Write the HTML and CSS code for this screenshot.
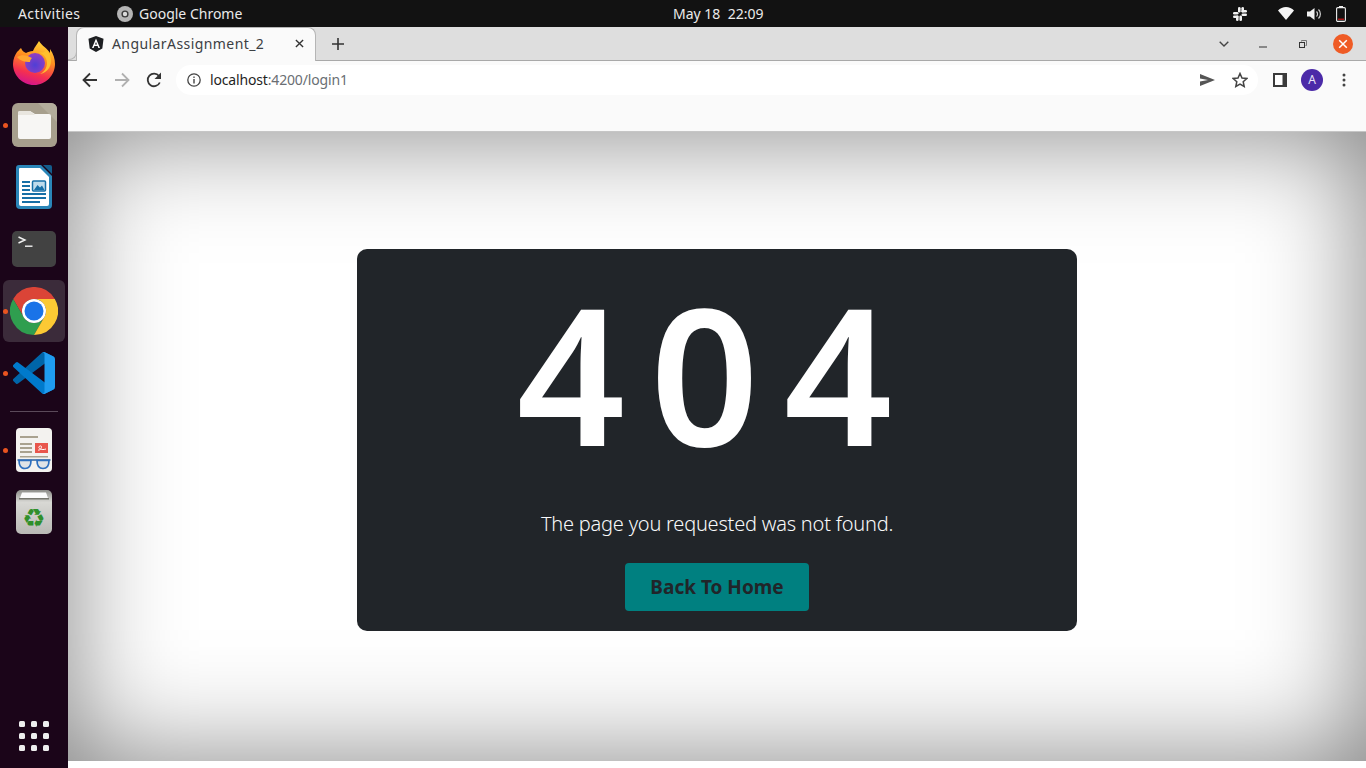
FILE: index.html
```html
<!DOCTYPE html>
<html lang="en">
<head>
<meta charset="utf-8">
<title>AngularAssignment_2</title>
<link rel="stylesheet" href="styles.css">
</head>
<body>
<header class="topbar">
  <span class="activities">Activities</span>
  <span class="appmenu">
    <svg class="appmenu-icon" viewBox="0 0 16 16"><circle cx="8" cy="8" r="8" fill="#b5b5b5"/><circle cx="8" cy="8" r="3.6" fill="#3a3a3a"/><circle cx="8" cy="8" r="2.2" fill="#dcdcdc"/></svg>
    Google Chrome
  </span>
  <time class="clock">May 18&nbsp;&nbsp;22:09</time>
  <span class="tray">
    <svg class="tray-slack" viewBox="0 0 14 14"><g fill="#f2f2f2"><rect x="5" y="0" width="2.6" height="5.500" rx="1.300"/><rect x="0" y="5" width="5.500" height="2.600" rx="1.300"/><rect x="8.400" y="0" width="2.600" height="5.500" rx="1.300"/><rect x="8.500" y="3" width="5.500" height="2.600" rx="1.300"/><rect x="3" y="8.500" width="2.600" height="5.500" rx="1.300"/><rect x="0" y="8.400" width="5.500" height="2.600" rx="1.300"/><rect x="6.400" y="8.500" width="2.600" height="5.500" rx="1.300"/><rect x="8.500" y="6.400" width="5.500" height="2.600" rx="1.300"/></g></svg>
    <svg class="tray-wifi" viewBox="0 0 16 13"><path d="M0 3.500C2 1.400 5 0 8 0s6 1.400 8 3.500L8 13Z" fill="#f5f5f5"/></svg>
    <svg class="tray-vol" viewBox="0 0 15 14"><path d="M0 4.500h3L7.500 1v12L3 9.500H0Z" fill="#f0f0f0"/><path d="M9.500 4.500a3.500 3.500 0 0 1 0 5M11.500 2.500a6.300 6.300 0 0 1 0 9" fill="none" stroke="#cfcfcf" stroke-width="1.200"/></svg>
    <svg class="tray-bat" viewBox="0 0 10 16"><rect x="3" y="0" width="4" height="2" fill="#eee"/><rect x=".6" y="1.600" width="8.800" height="13.800" rx="1.200" fill="none" stroke="#eee" stroke-width="1.100"/><rect x="2" y="12.600" width="6" height="1.200" fill="#d01818"/></svg>
  </span>
</header>

<div class="desktop">
  <nav class="dock">
    <div class="slot">
      <svg class="ico-firefox" viewBox="0 0 44 46">
        <defs>
          <linearGradient id="ffBody" x1=".7" y1="0" x2=".4" y2="1"><stop offset="0" stop-color="#ffd93b"/><stop offset=".4" stop-color="#ff8f1f"/><stop offset=".75" stop-color="#f5304f"/><stop offset="1" stop-color="#d3158c"/></linearGradient>
          <radialGradient id="ffGlobe" cx=".5" cy=".6" r=".65"><stop offset="0" stop-color="#4f3fd6"/><stop offset="1" stop-color="#9a3fbf"/></radialGradient>
        </defs>
        <path d="M1 24C1 35 10 45 22 45s21-10 21-21c0-5-1.500-10-5-15l0 4C35 8 30 6 27 1c-3 5-5 7-6 10-3 0-5 1-7 2-3-1-4-3-5-5-2 2-3 3-4 4-2 3-4 7-4 12Z" fill="url(#ffBody)"/>
        <circle cx="23" cy="23" r="10" fill="url(#ffGlobe)"/>
        <path d="M24 12c6 0 11 5 11 11 0 5-3 9-7 11 6-1 11-6 11-13 0-5-2-9-5-11-1 3-5 3-10 2Z" fill="#ffc02e"/>
        <path d="M5 17c5-3 10-2 15 1-1 1-2 2-2 4-5 0-10-1-13-5Z" fill="#ffa630"/>
      </svg>
    </div>
    <div class="slot running">
      <svg class="ico-files" viewBox="0 0 45 44">
        <rect width="45" height="44" rx="6" fill="#a79f8d"/>
        <path d="M26 0h13a6 6 0 0 1 6 6v13Z" fill="#b4ad9c"/>
        <path d="M6 10a2 2 0 0 1 2-2h10l5 3h14a2 2 0 0 1 2 2v21a2 2 0 0 1-2 2H8a2 2 0 0 1-2-2Z" fill="#f7f6f4"/>
        <path d="M6 12h17l-5-4H8a2 2 0 0 0-2 2Z" fill="#e9e6df"/>
      </svg>
    </div>
    <div class="slot">
      <svg class="ico-writer" viewBox="0 0 36 44">
        <path d="M3 0h22l11 11v29a4 4 0 0 1-4 4H4a4 4 0 0 1-4-4V3a3 3 0 0 1 3-3Z" fill="#2a86b8"/>
        <path d="M4 3h20l9 9v27a2 2 0 0 1-2 2H5a2 2 0 0 1-2-2V4a1 1 0 0 1 1-1Z" fill="#fff"/>
        <path d="M27 0l9 9V2a2 2 0 0 0-2-2Z" fill="#135d8c"/>
        <g fill="#176fa6"><rect x="6" y="16" width="8" height="2"/><rect x="6" y="20" width="8" height="2"/><rect x="6" y="24" width="8" height="2"/><rect x="6" y="28" width="24" height="2"/><rect x="6" y="32" width="24" height="2"/><rect x="6" y="36" width="18" height="2"/></g>
        <rect x="16.500" y="16" width="13" height="10" rx="1" fill="#bfdcec" stroke="#176fa6" stroke-width="1.500"/>
        <path d="M18 25l3.500-5 2.500 2.500 2-2 2.500 4.500Z" fill="#176fa6"/>
      </svg>
    </div>
    <div class="slot">
      <svg class="ico-term" viewBox="0 0 44 36">
        <rect width="44" height="36" rx="5" fill="#424242"/>
        <path d="M6.500 6l6.500 3-6.500 3" fill="none" stroke="#f2f2f2" stroke-width="1.400"/>
        <rect x="13" y="14.500" width="7.500" height="1.400" fill="#f2f2f2"/>
      </svg>
    </div>
    <div class="slot running active">
      <svg class="ico-chrome" viewBox="0 0 48 48">
        <path d="M44.800 12A24 24 0 0 0 3.200 12L13.600 30A12 12 0 0 1 24 12Z" fill="#db4437"/>
        <path d="M3.200 12A24 24 0 0 0 24 48L34.400 30A12 12 0 0 1 13.600 30Z" fill="#2f9e4f"/>
        <path d="M44.800 12H24A12 12 0 0 1 34.400 30L24 48A24 24 0 0 0 44.800 12Z" fill="#fcc934"/>
        <circle cx="24" cy="24" r="12" fill="#fff"/>
        <circle cx="24" cy="24" r="9.500" fill="#1a73e8"/>
      </svg>
    </div>
    <div class="slot running">
      <svg class="ico-code" viewBox="0 0 100 100">
        <path d="M96.460 10.800 75.860.87a6.220 6.220 0 0 0-7.100 1.200L1.300 63.580a4.160 4.160 0 0 0 0 6.150l5.510 5a4.160 4.160 0 0 0 5.320.24L93.340 14.400a4.130 4.130 0 0 1 6.660 3.290v-.24a6.250 6.250 0 0 0-3.540-5.650Z" fill="#0065a9"/>
        <path d="M96.460 89.200 75.860 99.130a6.220 6.220 0 0 1-7.100-1.200L1.300 36.420a4.160 4.160 0 0 1 0-6.150l5.510-5a4.160 4.160 0 0 1 5.320-.24l81.210 60.570a4.130 4.130 0 0 0 6.660-3.290v.24a6.250 6.250 0 0 1-3.540 5.650Z" fill="#007acc"/>
        <path d="M75.860 99.130a6.220 6.220 0 0 1-7.100-1.200c2.300 2.300 6.240.67 6.240-2.580V4.650c0-3.250-3.940-4.880-6.240-2.580a6.220 6.220 0 0 1 7.100-1.200l20.600 9.910A6.250 6.250 0 0 1 100 16.400v67.200a6.250 6.250 0 0 1-3.540 5.630Z" fill="#1f9cf0"/>
      </svg>
    </div>
    <div class="dock-sep"></div>
    <div class="slot running">
      <svg class="ico-viewer" viewBox="0 0 36 44">
        <rect width="36" height="44" rx="4" fill="#f3f2ef"/>
        <g fill="#a9a28f"><rect x="4" y="8" width="18" height="2"/><rect x="4" y="15" width="12" height="2"/><rect x="4" y="19" width="12" height="2"/><rect x="4" y="23" width="12" height="2"/><rect x="4" y="28" width="28" height="1.500"/></g>
        <rect x="19" y="15" width="13" height="10" fill="#e8564c"/>
        <path d="M22 22c3 1 5-5 2-4s0 5 6 3" fill="none" stroke="#fff" stroke-width="1"/>
        <path d="M1.500 32h33" stroke="#2a5f9e" stroke-width="1.500"/>
        <g fill="#dfe3e6" stroke="#2d6fbe" stroke-width="1.700"><path d="M3 32.500h12c0 4-1.500 8-6 8s-6-4-6-8Z"/><path d="M21 32.500h12c0 4-1.500 8-6 8s-6-4-6-8Z"/></g>
      </svg>
    </div>
    <div class="slot">
      <svg class="ico-trash" viewBox="0 0 36 44">
        <defs><linearGradient id="trashG" x1="0" y1="0" x2="0" y2="1"><stop offset="0" stop-color="#8e8e8a"/><stop offset=".28" stop-color="#d8d8d4"/><stop offset="1" stop-color="#b9b9b5"/></linearGradient></defs>
        <rect width="36" height="44" rx="5" fill="url(#trashG)"/>
        <path d="M4 8l2-5.500h24l2 5.500Z" fill="#fbfbfb"/>
        <rect x="3" y="8" width="30" height="1.500" fill="#77776f"/>
        <text class="recycle" x="18" y="37" text-anchor="middle">♻</text>
      </svg>
    </div>
    <div class="app-grid">
      <i></i><i></i><i></i><i></i><i></i><i></i><i></i><i></i><i></i>
    </div>
  </nav>

  <div class="browser">
    <div class="tabstrip">
      <div class="tab">
        <svg class="favicon" viewBox="0 0 16 16"><path d="M8 0 15.500 2.700 14.300 12.400 8 16 1.700 12.400.5 2.700Z" fill="#1d1f22"/><path d="M8 2.600 4 12h1.600l.8-2h3.200l.8 2H12ZM7 8.500 8 6l1 2.500Z" fill="#fff"/></svg>
        <span class="tab-title">AngularAssignment_2</span>
        <svg class="tab-close" viewBox="0 0 10 10"><path d="M1 1l8 8M9 1l-8 8" stroke="#333" stroke-width="1.500"/></svg>
      </div>
      <svg class="newtab" viewBox="0 0 12 12"><path d="M6 0v12M0 6h12" stroke="#333" stroke-width="1.600"/></svg>
      <div class="winctl">
        <span class="winbtn"><svg class="ctl-chev" viewBox="0 0 10 6"><path d="M.7.7 5 5 9.300.7" fill="none" stroke="#444" stroke-width="1.400"/></svg></span>
        <span class="winbtn"><svg class="ctl-min" viewBox="0 0 8 8"><rect y="6.500" width="8" height="1" fill="#333"/></svg></span>
        <span class="winbtn"><svg class="ctl-max" viewBox="0 0 8 8"><path d="M2.500 1.500V.5h5v5h-1" fill="none" stroke="#777"/><rect x=".5" y="2.500" width="5" height="5" fill="none" stroke="#333"/></svg></span>
        <span class="winbtn"><svg class="ctl-close" viewBox="0 0 20 20"><circle cx="10" cy="10" r="10" fill="#ef5b25"/><path d="M6.200 6.200l7.600 7.600M13.800 6.200l-7.600 7.600" stroke="#fff" stroke-width="1.500"/></svg></span>
      </div>
    </div>

    <div class="toolbar">
      <span class="tbtn"><svg class="i16" viewBox="0 0 16 16"><path d="M15 8H2M8 1.500 1.500 8 8 14.500" fill="none" stroke="#333" stroke-width="1.800"/></svg></span>
      <span class="tbtn"><svg class="i16" viewBox="0 0 16 16"><path d="M1 8h13M8 1.500 14.500 8 8 14.500" fill="none" stroke="#b0b0b0" stroke-width="1.800"/></svg></span>
      <span class="tbtn"><svg class="i16" viewBox="0 0 16 16"><path d="M13.800 10.500A6.300 6.300 0 1 1 13 4" fill="none" stroke="#333" stroke-width="1.800"/><path d="M15 .5V7H8.500Z" fill="#333"/></svg></span>
      <div class="omnibox">
        <svg class="info" viewBox="0 0 14 14"><circle cx="7" cy="7" r="6.200" fill="none" stroke="#444" stroke-width="1.300"/><rect x="6.300" y="6" width="1.400" height="4.500" fill="#444"/><rect x="6.300" y="3.500" width="1.400" height="1.400" fill="#444"/></svg>
        <span class="url">localhost<span class="url-rest">:4200/login1</span></span>
        <svg class="send" viewBox="0 0 15 12"><path d="M0 0 15 6 0 12V7.500L8 6 0 4.500Z" fill="#555"/></svg>
        <svg class="star" viewBox="0 0 16 16"><path d="M8 1.500 10 6l4.800.5-3.600 3.200 1 4.800L8 12.100l-4.200 2.400 1-4.800L1.200 6.500 6 6Z" fill="none" stroke="#444" stroke-width="1.500"/></svg>
      </div>
      <span class="tbtn"><svg class="i14" viewBox="0 0 14 14"><rect width="14" height="14" fill="#3a3a3a"/><rect x="2" y="2" width="7.500" height="10" fill="#fff"/></svg></span>
      <span class="tbtn"><span class="avatar">A</span></span>
      <span class="tbtn"><svg class="dots" viewBox="0 0 4 14"><circle cx="2" cy="2" r="1.500" fill="#444"/><circle cx="2" cy="7" r="1.500" fill="#444"/><circle cx="2" cy="12" r="1.500" fill="#444"/></svg></span>
    </div>
    <div class="bookmarks"></div>

    <main class="page">
      <section class="card">
        <h1 class="code">404</h1>
        <p class="message">The page you requested was not found.</p>
        <a class="home" href="#">Back To Home</a>
      </section>
    </main>
  </div>
</div>
</body>
</html>
```

FILE: styles.css
```css
* { box-sizing: border-box; }
html, body { margin: 0; height: 100%; }
body {
  width: 1366px;
  height: 768px;
  overflow: hidden;
  display: flex;
  flex-direction: column;
  background: #fff;
  font-family: "Noto Sans", "Open Sans", sans-serif;
}
svg { display: block; flex: none; }

/* GNOME top bar */
.topbar {
  position: relative;
  height: 27px;
  flex: none;
  display: flex;
  align-items: center;
  background: #121212;
  color: #eaeaea;
  font-size: 14px;
  padding-left: 18px;
}
.activities { width: 99px; letter-spacing: .4px; }
.appmenu { display: flex; align-items: center; gap: 6px; }
.appmenu-icon { width: 16px; height: 16px; }
.clock {
  position: absolute;
  left: 673px;
  top: 4px;
  line-height: 19px;
}
.tray { margin-left: auto; display: flex; align-items: center; }
.tray-slack { width: 14px; height: 14px; margin-right: 31px; }
.tray-wifi { width: 16px; height: 13px; margin-right: 13px; }
.tray-vol { width: 15px; height: 14px; margin-right: 14px; }
.tray-bat { width: 10px; height: 16px; margin-right: 20px; }

/* Layout under top bar */
.desktop { flex: 1; display: flex; min-height: 0; }

/* Dock */
.dock {
  width: 68px;
  flex: none;
  display: flex;
  flex-direction: column;
  align-items: center;
  padding-top: 5px;
  background: #1b0519;
}
.slot {
  position: relative;
  width: 62px;
  height: 62px;
  flex: none;
  display: flex;
  align-items: center;
  justify-content: center;
  border-radius: 6px;
}
.slot.active { background: #3b2b3a; }
.slot.running::before {
  content: "";
  position: absolute;
  left: 0;
  top: 50%;
  width: 5px;
  height: 5px;
  margin-top: -2.5px;
  border-radius: 50%;
  background: #e95420;
}
.ico-firefox { width: 44px; height: 46px; }
.ico-files { width: 45px; height: 44px; }
.ico-writer, .ico-viewer, .ico-trash { width: 36px; height: 44px; }
.ico-term { width: 44px; height: 36px; }
.ico-chrome { width: 48px; height: 48px; }
.ico-code { width: 42px; height: 42px; }
.recycle { font-family: "DejaVu Sans", sans-serif; font-size: 26px; fill: #2f8f2a; }
.dock-sep {
  width: 48px;
  height: 1px;
  flex: none;
  margin: 7px 0 7px;
  background: #5b4a5a;
}
.app-grid {
  margin-top: auto;
  margin-bottom: 17px;
  display: grid;
  grid-template-columns: repeat(3, 6px);
  grid-auto-rows: 6px;
  gap: 6px;
}
.app-grid i { background: #eee; border-radius: 1.5px; }

/* Browser */
.browser { flex: 1; min-width: 0; display: flex; flex-direction: column; }
.tabstrip {
  height: 34px;
  flex: none;
  display: flex;
  align-items: flex-start;
  background: #dedede;
  border-bottom: 1px solid #a9a9a9;
}
.tab {
  position: relative;
  width: 240px;
  height: 34px;
  margin-left: 8px;
  display: flex;
  align-items: center;
  padding: 0 0 2px 11px;
  background: #fafafa;
  border: 1px solid #b5b5b5;
  border-bottom: 0;
  border-radius: 8px 8px 0 0;
}
.tab::before {
  content: "";
  position: absolute;
  left: -9px;
  bottom: 1px;
  width: 8px;
  height: 8px;
  border-right: 1px solid #b5b5b5;
  border-bottom: 1px solid #b5b5b5;
  border-bottom-right-radius: 8px;
}
.favicon { width: 16px; height: 16px; }
.tab-title {
  margin-left: 8px;
  font-size: 14px;
  letter-spacing: .42px;
  color: #3c4043;
  white-space: nowrap;
}
.tab-close { width: 9px; height: 9px; margin-left: auto; margin-right: 11px; }
.newtab { width: 12px; height: 12px; margin: 11px 0 0 16px; }
.winctl { margin-left: auto; margin-right: 3px; display: flex; height: 33px; }
.winbtn { width: 40px; display: flex; align-items: center; justify-content: center; }
.winbtn:first-child { padding-left: 2px; }
.ctl-chev { width: 10px; height: 6px; }
.ctl-min { width: 8px; height: 8px; }
.ctl-max { width: 8px; height: 8px; }
.ctl-close { width: 20px; height: 20px; }

.toolbar {
  height: 37px;
  flex: none;
  display: flex;
  align-items: center;
  padding: 0 6px;
  background: #fafafa;
}
.tbtn {
  width: 32px;
  height: 32px;
  flex: none;
  display: flex;
  align-items: center;
  justify-content: center;
}
.i16 { width: 16px; height: 16px; }
.i14 { width: 14px; height: 14px; }
.dots { width: 4px; height: 14px; }
.avatar {
  width: 22px;
  height: 22px;
  border-radius: 50%;
  background: #4b2aa8;
  color: #e8e4f7;
  font-size: 12px;
  line-height: 22px;
  text-align: center;
}
.omnibox {
  flex: 1;
  height: 30px;
  margin: 0 6px;
  display: flex;
  align-items: center;
  padding: 0 10px 0 11px;
  background: #fff;
  border-radius: 15px;
}
.info { width: 14px; height: 14px; }
.url { margin-left: 9px; font-size: 14px; letter-spacing: -.16px; color: #1f1f1f; }
.url-rest { color: #6a6e73; }
.send { width: 15px; height: 12px; margin-left: auto; }
.star { width: 16px; height: 16px; margin-left: 17px; }

.bookmarks {
  height: 34px;
  flex: none;
  background: #fafafa;
  border-bottom: 1px solid #c6c6c6;
}

/* Page content */
.page {
  height: 629px;
  flex: none;
  display: flex;
  justify-content: center;
  align-items: flex-start;
  padding-top: 117px;
  background: #fff;
  box-shadow: inset 0 0 110px rgba(0, 0, 0, .5);
}
.card {
  width: 720px;
  height: 382px;
  display: flex;
  flex-direction: column;
  align-items: center;
  padding: 29px 0 20px;
  background: #212529;
  border-radius: 10px;
}
.code {
  margin: 0;
  font-size: 190px;
  line-height: 190px;
  font-weight: 600;
  letter-spacing: 25px;
  color: #fff;
}
.message {
  margin: 41px 0 0;
  font-size: 20px;
  font-weight: 300;
  letter-spacing: -.22px;
  line-height: 30px;
  color: #f8f9fa;
}
.home {
  width: 184px;
  height: 48px;
  margin-top: 24px;
  display: flex;
  align-items: center;
  justify-content: center;
  background: #008080;
  border-radius: 4px;
  color: #212529;
  font-size: 19px;
  font-weight: 700;
  text-decoration: none;
}
```
